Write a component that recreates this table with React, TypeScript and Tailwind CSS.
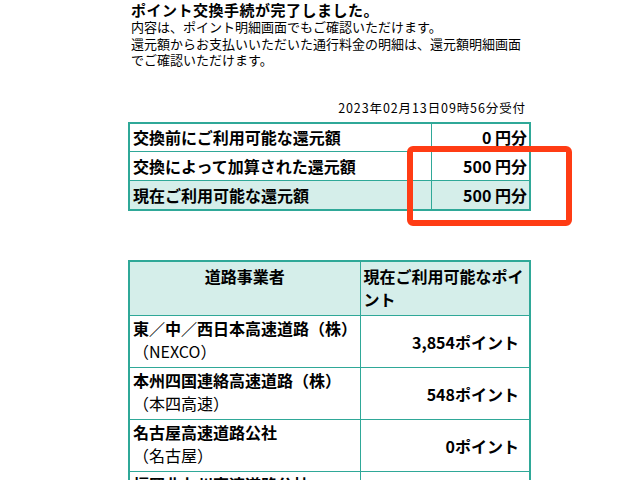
import React from 'react';

const font = { fontFamily: '"Noto Sans CJK JP", "Noto Sans", sans-serif' };

const balanceRows = [
  { label: '交換前にご利用可能な還元額', value: '0 円分', bg: 'bg-white' },
  { label: '交換によって加算された還元額', value: '500 円分', bg: 'bg-white' },
  { label: '現在ご利用可能な還元額', value: '500 円分', bg: 'bg-[#d5eeea]' },
];

const operators = [
  { name: '東／中／西日本高速道路（株）', sub: '（NEXCO）', points: '3,854ポイント' },
  { name: '本州四国連絡高速道路（株）', sub: '（本四高速）', points: '548ポイント' },
  { name: '名古屋高速道路公社', sub: '（名古屋）', points: '0ポイント' },
  { name: '福岡北九州高速道路公社', sub: '（福岡北九州）', points: '0ポイント' },
];

const App: React.FC = () => {
  return (
    <div className="w-[640px] h-[480px] overflow-hidden bg-white text-black" style={font}>
      <div className="ml-[128px] w-[403px]">
        <h1 className="pl-[3px] text-[15px] font-bold leading-[19px] tracking-[0.5px]">ポイント交換手続が完了しました。</h1>
        <p className="pl-[3px] text-[13px] leading-[16.5px]">
          内容は、ポイント明細画面でもご確認いただけます。
          <br />
          還元額からお支払いいただいた通行料金の明細は、還元額明細画面でご確認いただけます。
        </p>

        <div className="mt-[31px] pr-[5px] text-right text-[12.5px] leading-[16px] tracking-[0.9px]">2023年02月13日09時56分受付</div>

        <div className="relative mt-[6px]">
          <table className="w-[403px] border-collapse border-2 border-[#2fa898] table-fixed">
            <colgroup>
              <col className="w-[302px]" />
              <col />
            </colgroup>
            <tbody>
              {balanceRows.map((row) => (
                <tr key={row.label} className={`h-[29px] ${row.bg}`}>
                  <td className="border border-[#2fa898] pl-[3px] text-[16px] font-bold leading-[22px]">{row.label}</td>
                  <td className="border border-[#2fa898] pr-[2px] text-right text-[16px] font-bold leading-[22px]">{row.value}</td>
                </tr>
              ))}
            </tbody>
          </table>
          <div className="absolute left-[279px] top-[24px] w-[165px] h-[80px] rounded-[6px] border-[6px] border-[#ff3c14]" />
        </div>

        <table className="mt-[49px] w-[403px] border-collapse border-2 border-[#2fa898] table-fixed">
          <colgroup>
            <col className="w-[231px]" />
            <col />
          </colgroup>
          <thead>
            <tr className="h-[55px] bg-[#d5eeea]">
              <th className="border border-[#2fa898] pt-[3px] align-top text-center text-[16px] font-bold leading-[23px]">道路事業者</th>
              <th className="border border-[#2fa898] pl-[3px] pt-[3px] align-top text-left text-[16px] font-bold leading-[23px]">現在ご利用可能なポイント</th>
            </tr>
          </thead>
          <tbody>
            {operators.map((op) => (
              <tr key={op.name} className="h-[52px]">
                <td className="border border-[#2fa898] pl-[3px] pt-[1px] pb-[3px] align-top text-[16px] leading-[23px]">
                  <div className="font-bold">{op.name}</div>
                  <div>{op.sub}</div>
                </td>
                <td className="border border-[#2fa898] pr-[10px] align-middle text-right text-[16px] font-bold">{op.points}</td>
              </tr>
            ))}
          </tbody>
        </table>
      </div>
    </div>
  );
};

export default App;
